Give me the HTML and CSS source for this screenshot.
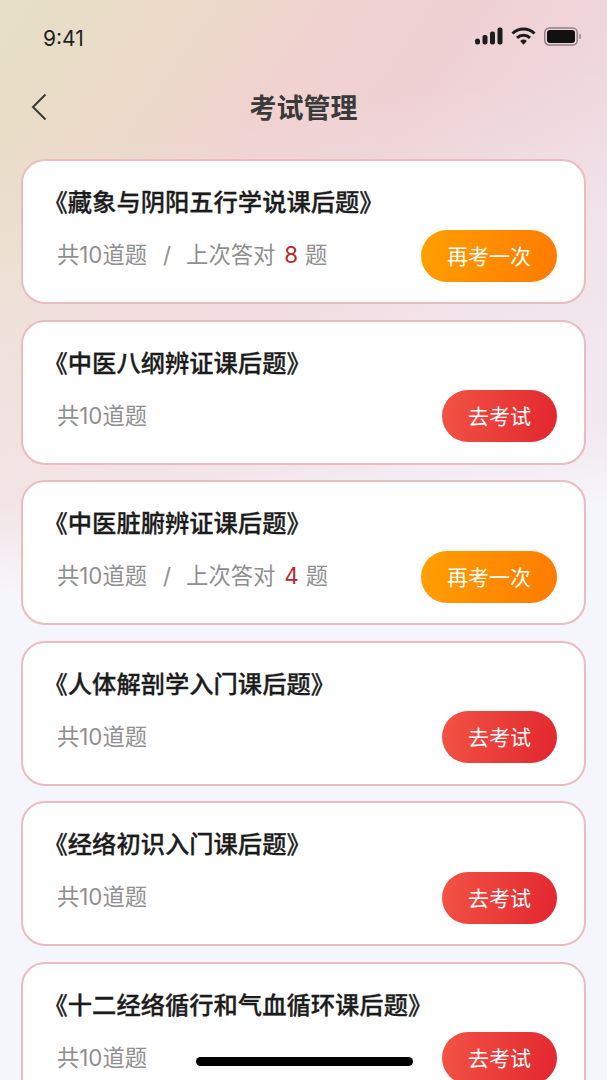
FILE: index.html
```html
<!DOCTYPE html>
<html>
<head>
    <title>考试管理</title>
    <link rel="stylesheet" href="styles.css">
</head>
<body>
    <div class="screen">
        <div class="status-bar">
            <span class="time">9:41</span>
            <div class="status-icons">
                <svg class="signal" width="28" height="18" viewBox="0 0 28 18">
                    <rect x="0" y="11.5" width="5" height="6" rx="2.5"/>
                    <rect x="7.5" y="8" width="5" height="9.5" rx="2"/>
                    <rect x="15" y="4.5" width="5" height="13" rx="2"/>
                    <rect x="22.5" y="0.5" width="5" height="17" rx="2"/>
                </svg>
                <svg class="wifi" width="25" height="18" viewBox="0 0 25 18">
                    <path d="M1.5 6.5 A16 16 0 0 1 23.5 6.5" fill="none" stroke="#1c1c1e" stroke-width="3"/>
                    <path d="M6 10.8 A9.5 9.5 0 0 1 19 10.8" fill="none" stroke="#1c1c1e" stroke-width="3"/>
                    <path d="M9.2 14 A5 5 0 0 1 15.8 14 L12.5 17.8 Z" fill="#1c1c1e"/>
                </svg>
                <svg class="battery" width="37" height="19" viewBox="0 0 37 19">
                    <rect x="0.8" y="1" width="32.4" height="17" rx="4.5" fill="none" stroke="#8f8088" stroke-width="1.5"/>
                    <rect x="3" y="3" width="28" height="13" rx="3" fill="#111"/>
                    <rect x="35" y="7" width="2" height="5" rx="1" fill="#a5959c"/>
                </svg>
            </div>
        </div>

        <div class="nav-bar">
            <svg class="back" width="16" height="28" viewBox="0 0 16 28">
                <path d="M14.5 1.5 L2 14 L14.5 26.5" fill="none" stroke="#3a3a3a" stroke-width="2"/>
            </svg>
            <h1>考试管理</h1>
        </div>

        <div class="list">
            <div class="card">
                <div class="card-title">《藏象与阴阳五行学说课后题》</div>
                <div class="card-row">
                    <div class="info">共10道题<span class="sep">/</span>上次答对<span class="score">8</span>题</div>
                    <button class="btn btn-orange">再考一次</button>
                </div>
            </div>
            <div class="card">
                <div class="card-title">《中医八纲辨证课后题》</div>
                <div class="card-row">
                    <div class="info">共10道题</div>
                    <button class="btn btn-red">去考试</button>
                </div>
            </div>
            <div class="card">
                <div class="card-title">《中医脏腑辨证课后题》</div>
                <div class="card-row">
                    <div class="info">共10道题<span class="sep">/</span>上次答对<span class="score">4</span>题</div>
                    <button class="btn btn-orange">再考一次</button>
                </div>
            </div>
            <div class="card">
                <div class="card-title">《人体解剖学入门课后题》</div>
                <div class="card-row">
                    <div class="info">共10道题</div>
                    <button class="btn btn-red">去考试</button>
                </div>
            </div>
            <div class="card">
                <div class="card-title">《经络初识入门课后题》</div>
                <div class="card-row">
                    <div class="info">共10道题</div>
                    <button class="btn btn-red">去考试</button>
                </div>
            </div>
            <div class="card">
                <div class="card-title">《十二经络循行和气血循环课后题》</div>
                <div class="card-row">
                    <div class="info">共10道题</div>
                    <button class="btn btn-red">去考试</button>
                </div>
            </div>
        </div>

        <div class="home-bar"></div>
    </div>
</body>
</html>
```

FILE: styles.css
```css
html, body {
    margin: 0;
    padding: 0;
    height: 100%;
}

body {
    font-family: "Noto Sans CJK SC", "Noto Sans", sans-serif;
    overflow: hidden;
}

.screen {
    position: relative;
    width: 607px;
    height: 1080px;
    overflow: hidden;
    background:
        linear-gradient(172deg, rgba(245, 246, 251, 0) 150px, rgba(245, 246, 251, 0.3) 300px, rgba(245, 246, 251, 0.5) 500px, #f5f6fb 590px),
        linear-gradient(125deg, #e6dfc6 0, #ebdac8 160px, #f0d2d0 280px, #efd1d4 400px, #efdbe3 620px);
}

.status-bar {
    height: 76px;
    padding: 0 26px 0 43px;
    display: flex;
    justify-content: space-between;
    align-items: center;
}

.time {
    font-family: Inter, "Liberation Sans", sans-serif;
    font-size: 21px;
    color: #1f1f1f;
}

.status-icons {
    display: flex;
    align-items: center;
    gap: 8px;
    margin-top: -4px;
}

.signal {
    fill: #1c1c1e;
}

.nav-bar {
    position: relative;
    height: 62px;
    display: flex;
    justify-content: center;
    align-items: center;
}

.nav-bar h1 {
    margin: 0;
    font-size: 27px;
    font-weight: 700;
    color: #3a3a3a;
    transform: translateY(-1px);
}

.back {
    position: absolute;
    left: 31px;
    top: 17px;
}

.list {
    padding: 21px 21px 0;
    display: flex;
    flex-direction: column;
    gap: 15.5px;
}

.card {
    box-sizing: border-box;
    flex: none;
    height: 145px;
    padding: 23px 27px 20px 20.5px;
    background: #fff;
    border: 2px solid #ebbbbd;
    border-radius: 24px;
}

.card-title {
    font-size: 24.3px;
    line-height: 34px;
    font-weight: 500;
    -webkit-text-stroke: 0.3px #1c1c1c;
    color: #1c1c1c;
}

.card-row {
    margin-top: 11.5px;
    display: flex;
    justify-content: space-between;
    align-items: center;
}

.info {
    padding-left: 13.5px;
    padding-bottom: 5px;
    font-family: Inter, "Noto Sans CJK SC", sans-serif;
    font-size: 22.3px;
    color: #8f8f8f;
}

.sep {
    margin: 0 15px 0 16px;
}

.score {
    margin: 0 7px 0 9px;
    color: #b8262c;
}

.btn {
    height: 52px;
    padding: 0 26px 2px;
    border: none;
    border-radius: 26px;
    font-family: inherit;
    font-size: 21px;
    color: #fff;
}

.btn-orange {
    background: linear-gradient(100deg, #ffa000, #ff7a00);
}

.btn-red {
    background: linear-gradient(100deg, #f25444, #e2262f);
}

.home-bar {
    position: absolute;
    left: 196px;
    top: 1057px;
    width: 217px;
    height: 9px;
    border-radius: 5px;
    background: #000;
}
```
